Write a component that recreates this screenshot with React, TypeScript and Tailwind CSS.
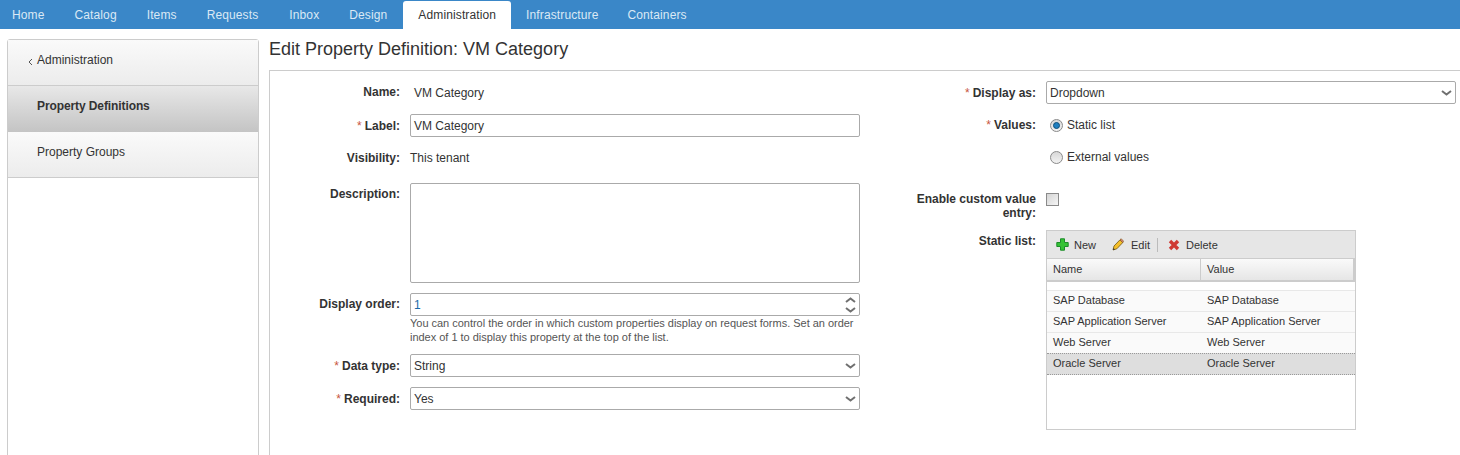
import React from 'react';

const tabs = [
  { name: 'Home', nudge: '' },
  { name: 'Catalog', nudge: '' },
  { name: 'Items', nudge: '' },
  { name: 'Requests', nudge: '' },
  { name: 'Inbox', nudge: 'ml-[1px]' },
  { name: 'Design', nudge: '' },
  { name: 'Administration', nudge: 'ml-[1px]' },
  { name: 'Infrastructure', nudge: '' },
  { name: 'Containers', nudge: '-ml-[1px]' },
];

const Chevron: React.FC<{ up?: boolean }> = ({ up }) => (
  <svg width="11" height="6" viewBox="0 0 11 6" className={up ? 'rotate-180' : ''}>
    <path d="M1 1 L5.5 4.5 L10 1" fill="none" stroke="#707070" strokeWidth="2" />
  </svg>
);

const Label: React.FC<{ text: string; required?: boolean; w: string }> = ({ text, required, w }) => (
  <div className={`${w} shrink-0 text-right font-bold`}>
    {required && <span className="mr-[3px] font-normal text-[#c8553d]">*</span>}
    {`${text}:`}
  </div>
);

const Select: React.FC<{ value: string; className?: string }> = ({ value, className }) => (
  <div className={`flex h-[23px] items-center justify-between rounded-[2px] border border-[#aaa] bg-white pl-[3px] pr-[3px] ${className ?? ''}`}>
    <span>{value}</span>
    <Chevron />
  </div>
);

const Radio: React.FC<{ checked?: boolean; text: string }> = ({ checked, text }) => (
  <div className="flex items-center gap-[4px] pl-[4px]">
    <span className="flex h-[13px] w-[13px] items-center justify-center rounded-full border border-[#8a8a8a] bg-gradient-to-b from-[#d8d8d8] to-[#f2f2f2]">
      {checked && <span className="h-[7px] w-[7px] rounded-full border border-[#0f4f7a] bg-[#1f7fc0]" />}
    </span>
    <span>{text}</span>
  </div>
);

const rows = [
  ['SAP Database', 'SAP Database'],
  ['SAP Application Server', 'SAP Application Server'],
  ['Web Server', 'Web Server'],
  ['Oracle Server', 'Oracle Server'],
];

const StaticList: React.FC = () => (
  <div className="h-[200px] w-[310px] border border-[#ccc] bg-white text-[11px]">
    <div className="flex h-[28px] items-center border-b border-[#ccc] bg-[#e6e6e6] pl-[9px]">
      <svg width="13" height="13" viewBox="0 0 13 13">
        <path d="M4.5 .8h4v3.7h3.7v4H8.500v3.700h-4V8.500H.8v-4h3.700z" fill="#35c235" stroke="#1c8c2a" strokeWidth="1" strokeLinejoin="round" />
      </svg>
      <span className="ml-[5px]">New</span>
      <svg width="12" height="13" viewBox="0 0 12 13" className="ml-[16px]">
        <path d="M1 12 L2 8 L8 1.800 L10.800 4.500 L4.800 10.800 Z" fill="#f5bf2a" stroke="#6e5410" strokeWidth="0.8" strokeLinejoin="round" />
        <path d="M8 1.800 L9.200 .7 L11.600 3.200 L10.800 4.500 Z" fill="#e8837a" stroke="#6e5410" strokeWidth="0.6" />
        <path d="M1 12 L1.500 10 L3 11.500 Z" fill="#333" />
      </svg>
      <span className="ml-[7px]">Edit</span>
      <span className="ml-[7px] h-[14px] w-px bg-[#bbb]" />
      <svg width="12" height="12" viewBox="0 0 12 12" className="ml-[10px]">
        <path d="M2 2 L10 10 M10 2 L2 10" stroke="#cf3a34" strokeWidth="3.400" />
      </svg>
      <span className="ml-[6px]">Delete</span>
    </div>
    <div className="flex h-[23px] items-center border-b-2 border-[#ccc] bg-gradient-to-b from-[#fafafa] to-[#e6e6e6]">
      <div className="flex h-full w-[154px] items-center border-r border-[#ccc] pb-[2px] pl-[6px]">Name</div>
      <div className="flex h-full flex-1 items-center border-r-2 border-[#ccc] pb-[2px] pl-[6px]">Value</div>
    </div>
    <div className="h-[9px] border-b border-[#e8e8e8]" />
    {rows.map((row, i) => {
      const selected = i === rows.length - 1;
      return (
        <div
          key={row[0]}
          className={`flex items-center pb-[2px] ${selected ? '-mt-px h-[22px] border-y border-dotted border-[#999] bg-[#dedede]' : 'h-[21px] border-b border-[#e8e8e8] bg-[#fafafa]'}`}
        >
          <div className="w-[154px] pl-[6px]">{row[0]}</div>
          <div className="pl-[6px]">{row[1]}</div>
        </div>
      );
    })}
  </div>
);

const App: React.FC = () => {
  return (
    <div className="h-[455px] overflow-hidden bg-white font-['Liberation_Sans',Arial,sans-serif] text-[12px] leading-[14px] text-[#333]">
      <nav className="flex h-[29px] items-end bg-[#3a87c8]">
        <div className="-ml-[3px] flex tracking-[0.12px]">
          {tabs.map((tab) => (
            <div
              key={tab.name}
              className={`flex h-[28px] items-center px-[15px] ${tab.nudge} ${tab.name === 'Administration' ? 'rounded-t-[3px] bg-white text-[#333]' : 'text-[#dbe9f5]'}`}
            >
              {tab.name}
            </div>
          ))}
        </div>
      </nav>

      <div className="flex h-[426px] pl-[7px] pt-[10px]">
        <aside className="h-[440px] w-[252px] shrink-0 rounded-t-[3px] border border-[#ccc]">
          <div className="flex h-[46px] items-center border-b border-[#ccc] bg-gradient-to-b from-[#fafafa] to-[#ececec] pb-[6px] pl-[20px]">
            <svg width="5" height="8" viewBox="0 0 5 8" className="mr-[4px] mt-[5px]">
              <path d="M4 1 L1 4 L4 7" fill="none" stroke="#555" strokeWidth="1" />
            </svg>
            Administration
          </div>
          <div className="flex h-[46px] items-center bg-gradient-to-b from-[#e8e8e8] to-[#c4c4c4] pb-[6px] pl-[29px] font-bold tracking-[-0.1px]">
            Property Definitions
          </div>
          <div className="flex h-[46px] items-center border-b border-[#ccc] bg-gradient-to-b from-[#fafafa] to-[#ececec] pb-[6px] pl-[29px]">
            Property Groups
          </div>
        </aside>

        <main className="ml-[10px] min-w-0 flex-1">
          <h1 className="h-[31px] text-[18px] leading-[21px] text-[#333]">Edit Property Definition: VM Category</h1>
          <div className="h-[440px] border-l border-t border-[#ccc]">
            <div className="flex">
              <section className="w-[591px] shrink-0">
                <div className="mt-[14px] flex">
                  <Label w="w-[130px]" text="Name" />
                  <span className="ml-[14px] pt-px">VM Category</span>
                </div>
                <div className="mt-[14px] flex items-center">
                  <Label w="w-[130px]" text="Label" required />
                  <div className="ml-[10px] flex h-[23px] w-[450px] items-center rounded-[2px] border border-[#aaa] pl-[3px]">VM Category</div>
                </div>
                <div className="mt-[14px] flex items-center">
                  <Label w="w-[130px]" text="Visibility" />
                  <span className="ml-[10px]">This tenant</span>
                </div>
                <div className="mt-[18px] flex">
                  <div className="pt-[4px]"><Label w="w-[130px]" text="Description" /></div>
                  <div className="ml-[10px] h-[100px] w-[450px] rounded-[2px] border border-[#aaa]" />
                </div>
                <div className="mt-[10px] flex">
                  <div className="pt-[4px]"><Label w="w-[130px]" text="Display order" /></div>
                  <div className="ml-[10px] w-[450px]">
                    <div className="flex h-[23px] items-center justify-between rounded-[2px] border border-[#aaa] pl-[3px] pr-[3px]">
                      <span className="text-[#1a6aa8]">1</span>
                      <div className="flex flex-col gap-[4px]">
                        <Chevron up />
                        <Chevron />
                      </div>
                    </div>
                    <p className="text-[11px] leading-[14px] tracking-[-0.02px] text-[#555]">
                      You can control the order in which custom properties display on request forms. Set an order index of 1 to display this property at the top of the list.
                    </p>
                  </div>
                </div>
                <div className="mt-[10px] flex items-center">
                  <Label w="w-[130px]" text="Data type" required />
                  <Select className="ml-[10px] w-[450px]" value="String" />
                </div>
                <div className="mt-[10px] flex items-center">
                  <Label w="w-[130px]" text="Required" required />
                  <Select className="ml-[10px] w-[450px]" value="Yes" />
                </div>
              </section>

              <section className="min-w-0 flex-1 pl-[35px]">
                <div className="mt-[10px] flex items-center">
                  <Label w="w-[140px]" text="Display as" required />
                  <Select className="ml-[10px] w-[410px]" value="Dropdown" />
                </div>
                <div className="mt-[14px] flex items-center">
                  <Label w="w-[140px]" text="Values" required />
                  <div className="ml-[10px]"><Radio checked text="Static list" /></div>
                </div>
                <div className="mt-[18px] flex items-center">
                  <div className="w-[140px] shrink-0" />
                  <div className="ml-[10px]"><Radio text="External values" /></div>
                </div>
                <div className="mt-[28px] flex">
                  <Label w="w-[140px]" text="Enable custom value entry" />
                  <span className="ml-[10px] mt-px h-[13px] w-[13px] border border-[#8a8a8a] bg-gradient-to-br from-[#d4d4d4] to-[#f6f6f6]" />
                </div>
                <div className="mt-[10px] flex">
                  <div className="pt-[4px]"><Label w="w-[140px]" text="Static list" /></div>
                  <div className="ml-[10px]"><StaticList /></div>
                </div>
              </section>
            </div>
          </div>
        </main>
      </div>
    </div>
  );
};

export default App;
